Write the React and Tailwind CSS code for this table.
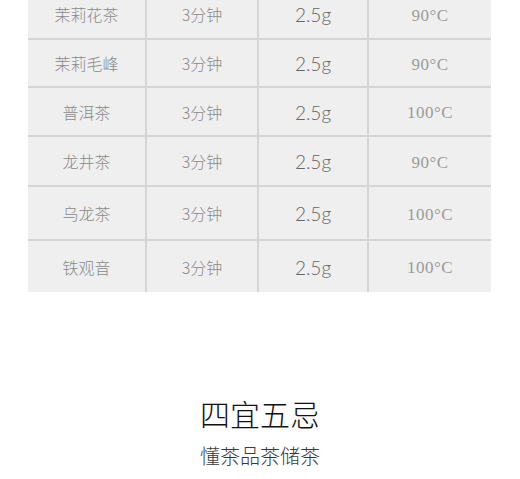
const rows = [
  ['茉莉花茶', '90°C', 'h-[50px]'],
  ['茉莉毛峰', '90°C', 'h-[48px]'],
  ['普洱茶', '100°C', 'h-[49px]'],
  ['龙井茶', '90°C', 'h-[50px]'],
  ['乌龙茶', '100°C', 'h-[54px]'],
  ['铁观音', '100°C', 'h-[51px]'],
];

const cjk = "font-['Noto_Sans_CJK_SC',sans-serif]";

export default function App() {
  return (
    <div className="w-[520px] h-[479px] bg-white overflow-hidden">
      <div className="ml-[28px] w-[463px] mt-[-10px] bg-[#efefef]">
        {rows.map(([name, temp, h], i) => (
          <div
            key={name}
            className={`grid grid-cols-[119px_112px_110px_122px] ${h} ${i < rows.length - 1 ? 'border-b-2 border-[#d5d5d5]' : ''}`}
          >
            <div className={`flex items-center justify-center border-r-2 border-[#d5d5d5] text-[16px] font-light text-[#8a8a8a] ${cjk}`}>
              {name}
            </div>
            <div className={`flex items-center justify-center border-r-2 border-[#d5d5d5] text-[16px] text-[#8a8a8a] font-light ${cjk}`}>
              3分钟
            </div>
            <div className="flex items-center justify-center pt-[3px] border-r-2 border-[#d5d5d5] text-[19px] text-[#666] font-light font-['Lato',sans-serif]">
              2.5g
            </div>
            <div className="flex items-center justify-center pt-[3px] text-[17px] text-[#9a9a9a] tracking-[0.5px] font-['Liberation_Serif',serif]">
              {temp}
            </div>
          </div>
        ))}
      </div>
      <div className="mt-[101px] flex flex-col items-center">
        <div className={`text-[30px] leading-[40px] text-[#111] font-light ${cjk}`}>四宜五忌</div>
        <div className={`mt-[9px] text-[20px] leading-[28px] text-[#3a3a3a] font-light ${cjk}`}>懂茶品茶储茶</div>
      </div>
    </div>
  );
}
